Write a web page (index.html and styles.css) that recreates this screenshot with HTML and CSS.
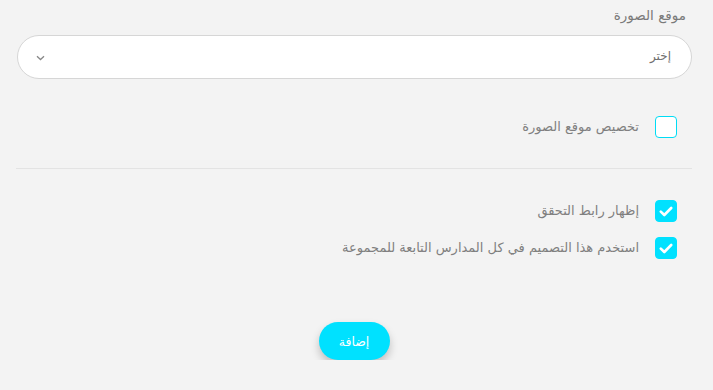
FILE: index.html
```html
<!DOCTYPE html>
<html lang="ar" dir="rtl">
	<head>
		<meta charset="utf-8" />
		<title>إضافة</title>
		<meta name="viewport" content="width=device-width, initial-scale=1" />
		<link rel="stylesheet" href="styles.css">
	</head>
	<body>
		<form class="form">
			<div class="field">
				<label class="field-label">موقع الصورة</label>
				<div class="select">
					<span class="select-value">إختر</span>
					<svg class="select-arrow" width="9" height="6" viewBox="0 0 9 6">
						<path d="M1 1.2 L4.5 4.5 L8 1.2" fill="none" stroke="#888" stroke-width="1.3" />
					</svg>
				</div>
			</div>

			<label class="check">
				<span class="box"></span>
				<span class="check-text">تخصيص موقع الصورة</span>
			</label>

			<hr class="divider">

			<div class="checks">
				<label class="check">
					<span class="box checked">
						<svg width="14" height="11" viewBox="0 0 14 11"><path d="M1.8 5.6 L5.3 9 L12.2 2" fill="none" stroke="#fff" stroke-width="2.6" stroke-linecap="round" stroke-linejoin="round" /></svg>
					</span>
					<span class="check-text">إظهار رابط التحقق</span>
				</label>
				<label class="check">
					<span class="box checked">
						<svg width="14" height="11" viewBox="0 0 14 11"><path d="M1.8 5.6 L5.3 9 L12.2 2" fill="none" stroke="#fff" stroke-width="2.6" stroke-linecap="round" stroke-linejoin="round" /></svg>
					</span>
					<span class="check-text">استخدم هذا التصميم في كل المدارس التابعة للمجموعة</span>
				</label>
			</div>

			<div class="actions">
				<button type="button" class="btn">إضافة</button>
			</div>
		</form>
	</body>
</html>
```

FILE: styles.css
```css
* { box-sizing: border-box; }

html {
	font: 13px/1.3 "DejaVu Sans", "Noto Sans", sans-serif;
	background: #f3f3f3;
}

body {
	margin: 0;
	color: #7d7d7d;
}

.form {
	padding: 7px 21px 0 21px;
}

.field-label {
	display: block;
	padding-right: 6px;
	font-size: 13.5px;
	color: #7a7a7a;
	height: 28px;
}

.select {
	display: flex;
	align-items: center;
	justify-content: space-between;
	height: 44px;
	margin-left: -4px;
	padding: 0 20px 0 18px;
	background: #fff;
	border: 1px solid #d6d6d6;
	border-radius: 22px;
}

.select-value {
	font-size: 12px;
	color: #6f6f6f;
}

.select-arrow {
	margin-top: 1px;
}

.check {
	display: flex;
	align-items: center;
	gap: 16px;
	padding-right: 15px;
}

.field + .check {
	margin-top: 37px;
}

.box {
	display: flex;
	align-items: center;
	justify-content: center;
	width: 22px;
	height: 22px;
	background: #fff;
	border: 1.5px solid #00dcf5;
	border-radius: 4px;
}

.box.checked {
	background: #00e1ff;
	border-color: #00e1ff;
}

.check-text {
	font-size: 13px;
	color: #7f7f7f;
}

.divider {
	margin: 30px 0 0 -5px;
	border: 0;
	border-top: 1px solid #e3e3e3;
}

.checks {
	display: flex;
	flex-direction: column;
	gap: 15px;
	margin-top: 31px;
}

.actions {
	display: flex;
	justify-content: center;
	margin-top: 63px;
	padding-right: 5px;
}

.btn {
	width: 71px;
	height: 38px;
	border: 0;
	border-radius: 19px;
	background: #00e1ff;
	color: #fff;
	font: 12.5px "DejaVu Sans", sans-serif;
	box-shadow: 0 5px 9px rgba(0, 0, 0, 0.22);
	cursor: pointer;
}
```
